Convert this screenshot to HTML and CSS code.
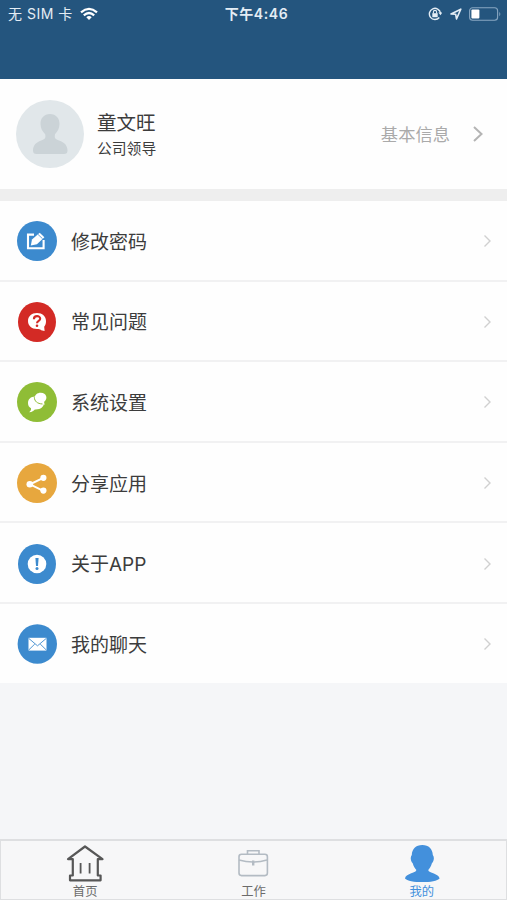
FILE: index.html
```html
<!DOCTYPE html>
<html lang="zh-CN">
<head>
<meta charset="utf-8">
<title>我的</title>
<link rel="stylesheet" href="styles.css">
</head>
<body>
<div class="screen">
  <header class="header">
    <div class="status">
      <div class="carrier"><span>无 SIM 卡</span>
        <svg width="18" height="14" viewBox="0 0 18 14" fill="none" stroke="#fff" stroke-width="2.3"><path d="M1 5.3Q9-1.5 17 5.3M3.8 8.3Q9 3.8 14.2 8.3"/><path d="M6.3 10.2Q9 8 11.7 10.2L9 13Z" fill="#fff" stroke="none"/></svg>
      </div>
      <div class="time">下午4:46</div>
      <div class="indicators">
        <svg width="14" height="14" viewBox="0 0 14 14" fill="none" stroke="#e4edf5"><path d="M11.3 10.5A5.6 5.6 0 1 1 12.5 6" stroke-width="1.4"/><path d="M10.4 5.5h4L12.5 8.2Z" fill="#e4edf5" stroke="none"/><path d="M5.4 6.5V5a1.6 1.6 0 0 1 3.2 0v1.5" stroke-width="1.1"/><path d="M4.3 6.2h5.4v4H4.3Z" fill="#e4edf5" stroke="none"/></svg>
        <svg width="12" height="12" viewBox="0 0 12 12" fill="none" stroke="#e4edf5" stroke-width="1.6" stroke-linejoin="round"><path d="M1 6L10.8 1.2L6.5 10.9L5.7 6.3Z"/></svg>
        <svg class="battery" width="33" height="14" viewBox="0 0 33 14"><rect x=".6" y=".8" width="28" height="12.4" rx="3" fill="none" stroke="#88a7c2" stroke-width="1.1"/><rect x="2.4" y="2.6" width="8" height="8.8" rx="1" fill="#fff"/><path d="M30.3 4.7q2 2.3 0 4.6Z" fill="#88a7c2"/></svg>
      </div>
    </div>
  </header>

  <section class="profile">
    <svg class="avatar" width="68" height="68" viewBox="0 0 68 68"><circle cx="34" cy="34" r="34" fill="#e1e7ea"/><path d="M34 14C28 14 24.3 18.4 24.5 24C24.6 28 26 31 29.2 34.2C30 38.4 28.7 39.2 25.2 40.4C19.8 42.2 17 45.5 17 50.5Q17 54 20.5 54H48Q51.5 54 51.5 50.5C51.5 45.5 48.6 42.2 43 40.4C39.5 39.2 38.2 38.4 39 34.2C42 31 43.4 28 43.5 24C43.7 18.4 40 14 34 14Z" fill="#cbd3d7"/></svg>
    <div class="person">
      <div class="name">童文旺</div>
      <div class="role">公司领导</div>
    </div>
    <span class="more">基本信息</span>
    <svg class="arrow" width="12" height="18" viewBox="0 0 12 18"><path d="M2 2L9.5 9L2 16" fill="none" stroke="#b4b4b4" stroke-width="2"/></svg>
  </section>

  <main class="menu">
    <div class="row">
      <svg class="badge" viewBox="0 0 40 40"><circle cx="20" cy="20" r="20" fill="#3c8ace"/><path d="M17 13.6H11V27.2H26.6V19" fill="none" stroke="#fff" stroke-width="2.1"/><path d="M13.8 24.6L15 18.6L22.7 11.8L27.4 16.2L19.9 23.3Z" fill="#fff"/><path d="M21 13.4L25.6 17.8" stroke="#3c8ace" stroke-width=".8"/></svg>
      <span class="label">修改密码</span><svg class="chevron" viewBox="0 0 9 14"><path d="M1.5 1.5L7 7L1.5 12.5"/></svg>
    </div>
    <div class="row">
      <svg class="badge narrow" viewBox="0 0 38 40" preserveAspectRatio="none"><ellipse cx="19" cy="20" rx="19" ry="20" fill="#d32a25"/><path d="M19 11C13.6 11 10 14.3 10 19C10 23.7 13.6 27 19 27C21 27 22 27 23.2 28.2L26.6 29L26.2 24.8C27.5 23.3 28 21.5 28 19C28 14.3 24.4 11 19 11Z" fill="#fff"/><path d="M15.9 17.2C15.9 13.1 22.2 13.3 22.2 16.7C22.2 19 19 18.6 19 21.2" fill="none" stroke="#d32a25" stroke-width="2.1"/><circle cx="19" cy="23.8" r="1.3" fill="#d32a25"/></svg>
      <span class="label">常见问题</span><svg class="chevron" viewBox="0 0 9 14"><path d="M1.5 1.5L7 7L1.5 12.5"/></svg>
    </div>
    <div class="row">
      <svg class="badge" viewBox="0 0 40 40"><circle cx="20" cy="20" r="20" fill="#8fbd36"/><path d="M18.4 14.5C13.5 14.5 11 17.4 11 21C11 23.4 12 25.2 14 26.3C14.2 28 13.5 29 12.2 30.3C15.2 30 16.6 28.8 17.8 27.4C23.5 27.7 26.6 25.2 27 21Z" fill="#fff"/><path d="M23.8 10.8C20 10.8 17.8 13 17.8 16C17.8 19.2 20 21 24 21C25 21.8 26.2 22.5 28 22.4C27.2 21.6 27.1 20.7 27.2 19.7C31.3 17 29.6 10.8 23.8 10.8Z" fill="#fff"/><path d="M17.3 15.2C17.6 19.5 20.2 21.6 25.5 22" fill="none" stroke="#8fbd36" stroke-width="1"/></svg>
      <span class="label">系统设置</span><svg class="chevron" viewBox="0 0 9 14"><path d="M1.5 1.5L7 7L1.5 12.5"/></svg>
    </div>
    <div class="row">
      <svg class="badge" viewBox="0 0 40 40"><circle cx="20" cy="20" r="20" fill="#e7a73e"/><path d="M26.3 14.8L13 21.3L26.3 27.8" fill="none" stroke="#fff" stroke-width="2"/><g fill="#fff"><circle cx="26.4" cy="14.8" r="3.1"/><circle cx="12.8" cy="21.3" r="3.3"/><circle cx="26.4" cy="27.6" r="3.1"/></g></svg>
      <span class="label">分享应用</span><svg class="chevron" viewBox="0 0 9 14"><path d="M1.5 1.5L7 7L1.5 12.5"/></svg>
    </div>
    <div class="row">
      <svg class="badge narrow" viewBox="0 0 38 40" preserveAspectRatio="none"><ellipse cx="19" cy="20" rx="19" ry="20" fill="#3c8ace"/><circle cx="19" cy="20" r="9.3" fill="#fff"/><path d="M17.4 14H20.6L20 22H18Z" fill="#3c8ace"/><circle cx="19" cy="24.5" r="1.5" fill="#3c8ace"/></svg>
      <span class="label">关于APP</span><svg class="chevron" viewBox="0 0 9 14"><path d="M1.5 1.5L7 7L1.5 12.5"/></svg>
    </div>
    <div class="row">
      <svg class="badge" viewBox="0 0 40 40"><circle cx="20.3" cy="20" r="19.7" fill="#3c8ace"/><rect x="11.5" y="13.8" width="18" height="12.8" fill="#fff"/><path d="M11.5 14.2L20.5 21.8L29.5 14.2M11.5 26.2L17.8 20M29.5 26.2L23.2 20" fill="none" stroke="#3c8ace" stroke-width=".9"/></svg>
      <span class="label">我的聊天</span><svg class="chevron" viewBox="0 0 9 14"><path d="M1.5 1.5L7 7L1.5 12.5"/></svg>
    </div>
  </main>

  <nav class="tabs">
    <div class="tab">
      <svg width="38" height="38" viewBox="0 0 38 38" fill="none" stroke="#575757" stroke-width="2.2" stroke-linejoin="round"><path d="M19 1.5L2 14.2H6.8V30.5H4V35.3H34.6V30.5H31.8V14.2H36.5Z"/><path d="M14.6 18V28.5M23.6 18V28.5" class="house-bars"/></svg>
      <span>首页</span>
    </div>
    <div class="tab">
      <svg width="38" height="38" viewBox="0 0 38 38" fill="none" stroke="#b3bbc3" stroke-width="1.6"><rect x="5" y="9.3" width="28.4" height="21.3" rx="2.5"/><path d="M13.5 9V5.8H25V9M5 15Q19 19 33 15"/><path d="M19.2 15.5V20.5" stroke-width="2.4"/></svg>
      <span>工作</span>
    </div>
    <div class="tab active">
      <svg width="38" height="38" viewBox="0 0 38 38" fill="#4390dc"><path d="M19.3 0C12.8 0 9 4 8.8 10C7 12 7.6 16 9.7 18.3C10.6 21.4 12 23.4 13.4 25C12.8 28.5 2.5 28.2 2 33.4C5.5 38.3 33 38.3 36.6 33.4C36 28.2 25.8 28.5 25.2 25C26.6 23.4 28 21.4 28.9 18.3C31 16 31.6 12 29.8 10C29.6 4 25.8 0 19.3 0Z"/></svg>
      <span>我的</span>
    </div>
  </nav>
</div>
</body>
</html>
```
FILE: styles.css
```css
* { box-sizing: border-box; }
body {
  margin: 0;
  font-family: "Inter", "Noto Sans CJK SC", sans-serif;
  color: #3c3c3c;
}
svg { display: block; flex: none; }
.screen {
  height: 900px;
  display: flex;
  flex-direction: column;
  background: #f5f6f8;
  overflow: hidden;
}
.header {
  height: 79px;
  flex: none;
  background: #24557e;
}
.status {
  height: 27px;
  padding: 0 6px 0 8px;
  display: grid;
  grid-template-columns: 1fr auto 1fr;
  align-items: center;
  color: #e4edf5;
  font-size: 14px;
  line-height: 20px;
}
.carrier { display: flex; align-items: center; gap: 7px; }
.carrier span { letter-spacing: .5px; }
.time { font-weight: 600; letter-spacing: .6px; padding-left: 4px; }
.indicators { display: flex; align-items: center; justify-content: flex-end; gap: 7px; }
.indicators svg:first-child { margin-right: 1px; }
.battery { margin-right: -1px; }
.profile {
  height: 110px;
  flex: none;
  display: flex;
  align-items: center;
  padding: 0 23px 0 16px;
  background: #fefefe;
}
.person { margin-left: 13px; flex: 1; padding-top: 2px; }
.name { font-size: 19.5px; line-height: 28px; }
.role { font-size: 14.8px; line-height: 24px; }
.more { font-size: 17.3px; line-height: 26px; color: #aaa; padding-top: 2px; }
.arrow { margin-left: 22px; }
.menu {
  flex: none;
  border-top: 12px solid #eee;
}
.row {
  height: 80.6px;
  display: flex;
  align-items: center;
  padding: 2px 15px 0 17px;
  background: #fefefe;
  border-bottom: 2px solid #f1f1f2;
}
.row:last-child { border-bottom: 0; height: 79px; }
.badge { width: 40px; height: 40px; }
.badge.narrow { width: 38px; margin: 0 1px; }
.label { flex: 1; margin-left: 14px; font-size: 19px; line-height: 28px; padding-top: 3px; }
.chevron { width: 9px; height: 14px; fill: none; stroke: #d0d0d0; stroke-width: 1.4; }
.tabs {
  margin-top: auto;
  height: 61px;
  flex: none;
  display: grid;
  grid-template-columns: repeat(3, 1fr);
  background: #f7f7f8;
  border: 1px solid #dedfe1;
  border-top-width: 2px;
}
.tab {
  display: flex;
  flex-direction: column;
  align-items: center;
  gap: 1px;
  padding-top: 4px;
  color: #6b6b6b;
  font-size: 12.3px;
  line-height: 16px;
}
.tab.active { color: #4390dc; }
.house-bars { stroke-width: 1.8; }
```
